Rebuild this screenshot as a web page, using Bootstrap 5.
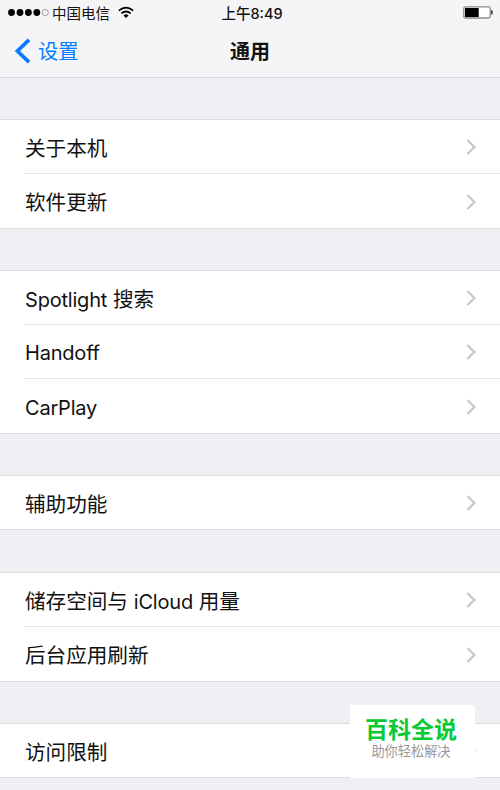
<!DOCTYPE html>
<html lang="zh-CN">
<head>
<meta charset="utf-8">
<meta name="viewport" content="width=device-width, initial-scale=1">
<title>通用</title>
<link href="https://cdn.jsdelivr.net/npm/bootstrap@5.3.0/dist/css/bootstrap.min.css" rel="stylesheet">
<style>
body{background:#efeff4;font-family:Inter,"Noto Sans CJK SC",sans-serif;color:#111;height:790px;overflow:hidden}
.top-area{background:#f5f5f7;height:78px;border-bottom:1px solid #d8d8dc}
.status-row{height:25px;font-size:14.5px;line-height:25px;padding:0 7px 0 8px}
.status-row span{padding-top:2px}
.carrier{margin-left:3px}
.clock{margin-left:2px}
.signal-dots{width:41px;height:9px}
.title-row{height:52px;font-size:20.3px;line-height:52px;padding-left:14px}
.title-row span{padding-top:1px}
.page-title{font-size:20px;font-weight:700}
.back-link{color:#087cff}
.settings{padding-top:41px;gap:41px}
.settings .list-group{background:#fff;border-bottom:1px solid #dddde1}
.settings .list-group-item{height:54px;padding:1px 24px 0 0;margin-left:24px;border:0;border-top:1px solid #e6e6e8;background:#fff;color:#111;font-size:20.6px;line-height:50px}
.settings .list-group-item:first-child{margin-left:0;padding-left:24px;border-top-color:#dddde1}
.settings .list-group-item:last-child:not(:first-child){height:55px}
.row-label{padding:3px 0 0 1px}
.row-label-latin{padding:2px 0 0 1px}
.latin{font-size:20px;letter-spacing:-.2px}
.after-single{margin-top:1px}
.brand-tag{left:350px;top:705px;width:125px;height:73px;background:#fff;padding-top:9px;z-index:2}
.brand-name{font-size:23px;line-height:32px;font-weight:700;color:#08ca35;padding-right:3px}
.brand-note{font-size:13.2px;line-height:11px;color:#999;padding-right:3px}
</style>
</head>
<body>
<header class="top-area">
  <div class="status-row position-relative d-flex align-items-center">
    <svg class="signal-dots" viewBox="0 0 41 9"><g fill="#000"><circle cx="3.5" cy="4.5" r="3.4"/><circle cx="12" cy="4.5" r="3.4"/><circle cx="20.4" cy="4.5" r="3.4"/><circle cx="28.8" cy="4.5" r="3.4"/></g><circle cx="37.2" cy="4.5" r="3.1" fill="none" stroke="#777" stroke-width=".7"/></svg>
    <span class="carrier">中国电信</span>
    <svg class="ms-2" width="16" height="13" viewBox="0 0 16 13" fill="none" stroke="#000" stroke-width="1.7"><path d="M.8 4.6Q8-1.4 15.2 4.6M3.3 7.4Q8 3.6 12.7 7.4"/><path d="M5.5 9.4Q8 7.3 10.5 9.4L8 12Z" fill="#000" stroke="none"/></svg>
    <span class="clock position-absolute start-50 translate-middle-x fw-medium text-nowrap">上午8:49</span>
    <svg class="ms-auto" width="30" height="13" viewBox="0 0 30 13"><rect x=".8" y=".8" width="26.4" height="11.2" rx="1.8" fill="#fff" stroke="#8b8b8b" stroke-width="1.3"/><path d="M2 2h13.7v9H2z"/><path d="M28 4.3h.7q1 0 1 1v2.3q0 1-1 1H28z" fill="#444"/></svg>
  </div>
  <div class="title-row position-relative d-flex align-items-center">
    <a class="back-link d-flex align-items-center text-decoration-none" href="#"><svg width="16" height="26" viewBox="0 0 16 26" fill="none" stroke="currentColor" stroke-width="3.7"><path d="M15 1.8 3.4 13 15 24.2"/></svg><span class="ms-2">设置</span></a>
    <span class="page-title position-absolute start-50 translate-middle-x">通用</span>
  </div>
</header>
<svg class="d-none"><symbol id="chev" viewBox="0 0 10 16"><path d="M1.4 1l7 7-7 7" fill="none" stroke="#c7c7cc" stroke-width="2.3"/></symbol></svg>
<main class="settings d-flex flex-column">
  <div class="list-group list-group-flush">
    <a class="list-group-item d-flex align-items-center justify-content-between" href="#"><span class="row-label">关于本机</span><svg width="10" height="16"><use href="#chev"/></svg></a>
    <a class="list-group-item d-flex align-items-center justify-content-between" href="#"><span class="row-label">软件更新</span><svg width="10" height="16"><use href="#chev"/></svg></a>
  </div>
  <div class="list-group list-group-flush">
    <a class="list-group-item d-flex align-items-center justify-content-between" href="#"><span class="row-label"><span class="latin">Spotlight</span> 搜索</span><svg width="10" height="16"><use href="#chev"/></svg></a>
    <a class="list-group-item d-flex align-items-center justify-content-between" href="#"><span class="row-label-latin latin">Handoff</span><svg width="10" height="16"><use href="#chev"/></svg></a>
    <a class="list-group-item d-flex align-items-center justify-content-between" href="#"><span class="row-label-latin latin">CarPlay</span><svg width="10" height="16"><use href="#chev"/></svg></a>
  </div>
  <div class="list-group list-group-flush">
    <a class="list-group-item d-flex align-items-center justify-content-between" href="#"><span class="row-label">辅助功能</span><svg width="10" height="16"><use href="#chev"/></svg></a>
  </div>
  <div class="list-group list-group-flush after-single">
    <a class="list-group-item d-flex align-items-center justify-content-between" href="#"><span class="row-label">储存空间与 <span class="latin">iCloud</span> 用量</span><svg width="10" height="16"><use href="#chev"/></svg></a>
    <a class="list-group-item d-flex align-items-center justify-content-between" href="#"><span class="row-label">后台应用刷新</span><svg width="10" height="16"><use href="#chev"/></svg></a>
  </div>
  <div class="list-group list-group-flush">
    <a class="list-group-item d-flex align-items-center justify-content-between" href="#"><span class="row-label">访问限制</span><svg width="10" height="16"><use href="#chev"/></svg></a>
  </div>
</main>
<aside class="brand-tag position-absolute text-center">
  <div class="brand-name">百科全说</div>
  <div class="brand-note">助你轻松解决</div>
</aside>
<script src="https://cdn.jsdelivr.net/npm/bootstrap@5.3.0/dist/js/bootstrap.bundle.min.js"></script>
</body>
</html>
